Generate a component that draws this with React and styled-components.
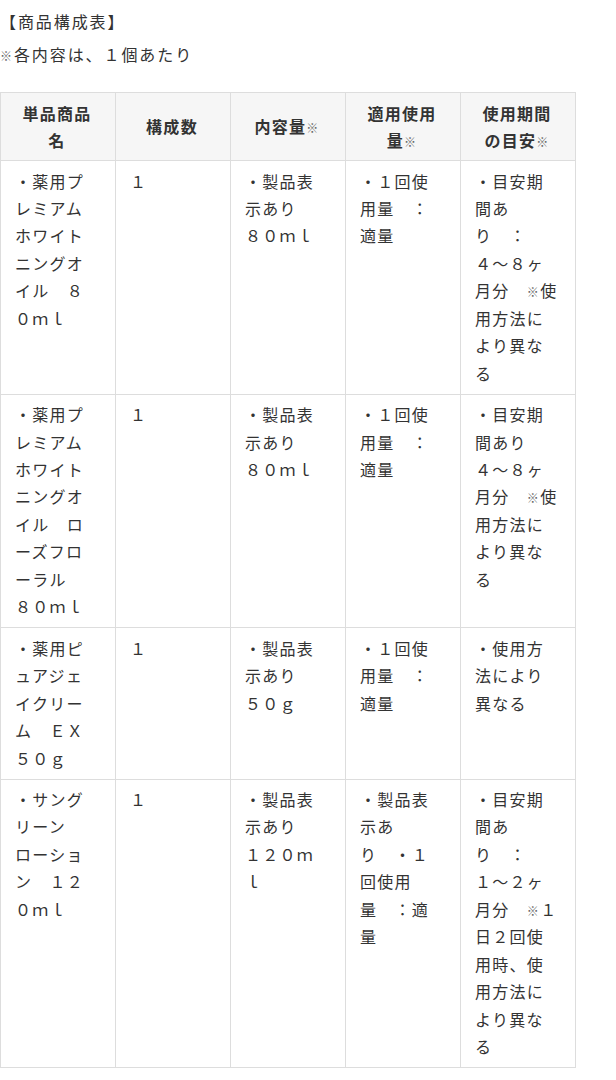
import styled, { createGlobalStyle } from "styled-components";

const GlobalStyle = createGlobalStyle`
	html, body {
		margin: 0;
		padding: 0;
		background: #ffffff;
	}
	body {
		font-family: "Noto Sans CJK JP", "Noto Sans", sans-serif;
		color: #333333;
	}
`;

// ※ is drawn smaller than the text around it in the original
const M = () => <Mark>※</Mark>;

const headers = [
	"単品商品名",
	"構成数",
	<>内容量<M /></>,
	<>適用使用量<M /></>,
	<>使用期間の目安<M /></>,
];

const rows = [
	[
		"・薬用プレミアムホワイトニングオイル　８０ｍｌ",
		"１",
		"・製品表示あり　８０ｍｌ",
		"・１回使用量　：適量",
		<>・目安期間あり　：　４〜８ヶ月分　<M />使用方法により異なる</>,
	],
	[
		"・薬用プレミアムホワイトニングオイル　ローズフローラル　８０ｍｌ",
		"１",
		"・製品表示あり　８０ｍｌ",
		"・１回使用量　：適量",
		<>・目安期間あり　４〜８ヶ月分　<M />使用方法により異なる</>,
	],
	[
		"・薬用ピュアジェイクリーム　ＥＸ　５０ｇ",
		"１",
		"・製品表示あり　５０ｇ",
		"・１回使用量　：適量",
		"・使用方法により異なる",
	],
	[
		"・サングリーン　ローション　１２０ｍｌ",
		"１",
		"・製品表示あり　１２０ｍｌ",
		"・製品表示あり　・１回使用量　：適量",
		<>・目安期間あり　：　１〜２ヶ月分　<M />１日２回使用時、使用方法により異なる</>,
	],
];

export default function App() {
	return (
		<>
			<GlobalStyle />
			<Page>
				<Title>【商品構成表】</Title>
				<Note>
					<M />各内容は、１個あたり
				</Note>
				<Table>
					<colgroup>
						{headers.map((_, i) => (
							<Col key={i} />
						))}
					</colgroup>
					<thead>
						<tr>
							{headers.map((h, i) => (
								<HeadCell key={i}>{h}</HeadCell>
							))}
						</tr>
					</thead>
					<tbody>
						{rows.map((row, r) => (
							<tr key={r}>
								{row.map((c, i) => (
									<Cell key={i}>{c}</Cell>
								))}
							</tr>
						))}
					</tbody>
				</Table>
			</Page>
		</>
	);
}

const Page = styled.main`
	padding-top: 8px;
	font-size: 16px;
	letter-spacing: 0.08em;
	line-break: normal;
`;

const Title = styled.p`
	margin: 0 0 6px;
	line-height: 27px;
	letter-spacing: 0.12em;
`;

const Note = styled.p`
	margin: 0 0 24px;
	line-height: 27px;
	letter-spacing: 0.12em;
`;

const Mark = styled.span`
	font-size: 12px;
	color: #666666;
	line-height: 1;
`;

const Table = styled.table`
	width: 574px;
	table-layout: fixed;
	border-collapse: collapse;
`;

const Col = styled.col`
	width: 115px;
`;

const HeadCell = styled.th`
	padding: 6.5px 16px 6.5px 14px;
	background: #f6f6f6;
	border: 1px solid #dddddd;
	font-weight: 700;
	line-height: 27px;
	text-align: center;
	vertical-align: middle;
	color: #333333;
`;

const Cell = styled.td`
	padding: 6.5px 16px 6.5px 14px;
	border: 1px solid #dddddd;
	line-height: 27.45px;
	text-align: left;
	vertical-align: top;
	color: #333333;
`;
